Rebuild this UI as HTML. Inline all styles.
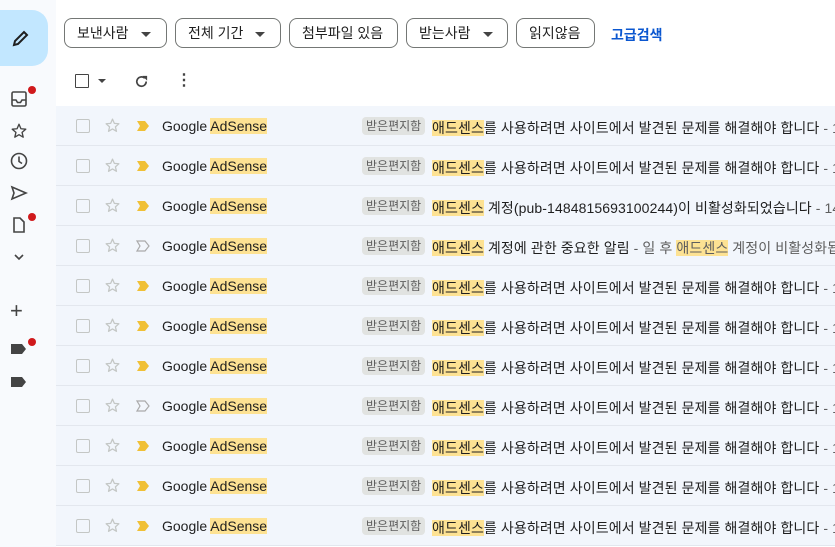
<!DOCTYPE html>
<html><head><meta charset="utf-8"><style>
body{margin:0;width:835px;height:547px;overflow:hidden;background:#fff;font-family:"Liberation Sans","Noto Sans CJK KR",sans-serif;position:relative}
.side{position:absolute;left:0;top:0;width:56px;height:547px;background:#f8fafd}
.compose{position:absolute;left:0;top:10px;width:48px;height:56px;background:#c2e7ff;border-radius:0 16px 16px 0}
.ic{position:absolute;left:10px}
.dot{position:absolute;width:8px;height:8px;border-radius:50%;background:#d0191c}
.chip{position:absolute;top:18px;height:30px;border:1px solid #747775;border-radius:8px;box-sizing:border-box;font-size:14px;color:#1f1f1f;line-height:28px;padding:0 12px}
.chip .ar{display:inline-block;width:0;height:0;border-left:5px solid transparent;border-right:5px solid transparent;border-top:5px solid #444;margin-left:12px;vertical-align:middle}
.row{position:absolute;left:56px;width:779px;height:39px;background:#f2f6fc;border-bottom:1px solid #e3e7ee}
.cb{position:absolute;left:20px;top:13px;width:12px;height:12px;border:1.5px solid #c4c7c5;border-radius:2px}
.st{position:absolute;left:48px;top:11px}
.imp{position:absolute;left:80px;top:14px}
.snd{position:absolute;left:106px;top:12px;font-size:14px;color:#1f1f1f}
.hl{background:#fde293}
.lbl{position:absolute;left:306px;top:11px;height:18px;line-height:18px;background:#e1e3e1;color:#5e5e5e;font-size:12px;padding:0 4px;border-radius:4px}
.sub{position:absolute;left:376px;top:12px;font-size:14px;color:#1f1f1f;white-space:nowrap;letter-spacing:0.1px}
.sub b{font-weight:normal;background:#fde293}
.g{color:#5e5e5e}
</style></head><body>
<div class="side">
<div class="compose"><svg style="position:absolute;left:12px;top:19px" width="18" height="18" viewBox="0 0 18 18"><path d="M2 16 L3 12 L12 3 L15 6 L6 15 Z" fill="none" stroke="#1f1f1f" stroke-width="2"/></svg></div>
<svg class="ic" style="top:90px" width="18" height="18" viewBox="0 0 18 18"><rect x="2" y="2" width="14" height="14" rx="1.5" fill="none" stroke="#444" stroke-width="1.6"/><path d="M2 10h4l1.5 2.5h3L12 10h4" fill="none" stroke="#444" stroke-width="1.6"/></svg><div class="dot" style="left:28px;top:86px"></div>
<svg class="ic" style="top:122px" width="18" height="18" viewBox="0 0 24 24"><path d="M12 3l2.6 6 6.4.6-4.9 4.3 1.5 6.3L12 16.9 6.4 20.2l1.5-6.3L3 9.6 9.4 9z" fill="none" stroke="#444" stroke-width="1.8" stroke-linejoin="round"/></svg>
<svg class="ic" style="top:152px" width="18" height="18" viewBox="0 0 18 18"><circle cx="9" cy="9" r="7.5" fill="none" stroke="#444" stroke-width="1.6"/><path d="M9 4.5v5l3 2" fill="none" stroke="#444" stroke-width="1.6"/></svg>
<svg class="ic" style="top:184px" width="18" height="18" viewBox="0 0 18 18"><path d="M2 3L16 9L2 15L4 9Z" fill="none" stroke="#444" stroke-width="1.6"/></svg>
<svg class="ic" style="top:216px" width="18" height="18" viewBox="0 0 18 18"><path d="M4 2h6l4 4v10H4Z" fill="none" stroke="#444" stroke-width="1.6"/></svg><div class="dot" style="left:28px;top:213px"></div>
<svg class="ic" style="top:250px" width="18" height="14" viewBox="0 0 18 14"><path d="M5 5l4 4 4-4" fill="none" stroke="#444" stroke-width="1.6"/></svg>
<div class="ic" style="top:298px;font-size:22px;color:#444;left:10px;line-height:26px">+</div>
<svg class="ic" style="top:342px" width="18" height="14" viewBox="0 0 18 14"><path d="M1 2h11l4 5-4 5H1Z" fill="#444"/></svg><div class="dot" style="left:28px;top:338px"></div>
<svg class="ic" style="top:375px" width="18" height="14" viewBox="0 0 18 14"><path d="M1 2h11l4 5-4 5H1Z" fill="#444"/></svg>
</div>
<div class="chip" style="left:64px;width:103px">보낸사람<span class="ar"></span></div>
<div class="chip" style="left:175px;width:106px">전체 기간<span class="ar"></span></div>
<div class="chip" style="left:289px;width:109px">첨부파일 있음</div>
<div class="chip" style="left:406px;width:102px">받는사람<span class="ar"></span></div>
<div class="chip" style="left:516px;width:79px">읽지않음</div>
<div style="position:absolute;left:611px;top:25px;font-size:14px;color:#0b57d0;font-weight:bold">고급검색</div>
<div style="position:absolute;left:75px;top:74px;width:12px;height:12px;border:1.6px solid #444;border-radius:1px"></div>
<div style="position:absolute;left:98px;top:79px;border-left:4px solid transparent;border-right:4px solid transparent;border-top:4px solid #444"></div>
<svg style="position:absolute;left:134px;top:74px" width="15" height="15" viewBox="0 0 16 16"><path d="M13 8A5 5 0 1 1 11.5 4.5" fill="none" stroke="#444" stroke-width="1.8"/><path d="M9 2h5v5z" fill="#444"/></svg>
<div style="position:absolute;left:176px;top:70px;font-size:16px;color:#444;font-weight:bold">⋮</div>
<div id="rows"></div>
<script>
var a='<b>애드센스</b>를 사용하려면 사이트에서 발견된 문제를 해결해야 합니다 <span class="g">- 14</span>';
var subs=[a,a,'<b>애드센스</b> 계정(pub-1484815693100244)이 비활성화되었습니다 <span class="g">- 14</span>','<b>애드센스</b> 계정에 관한 중요한 알림 <span class="g">- 일 후 <b>애드센스</b> 계정이 비활성화됩</span>',a,a,a,a,a,a,a];
var h='';
for(var i=0;i<11;i++){var hol=(i==3||i==7);
h+='<div class="row" style="top:'+(106+i*40)+'px"><div class="cb"></div><svg class="st" width="17" height="17" viewBox="0 0 24 24"><path d="M12 3l2.6 6 6.4.6-4.9 4.3 1.5 6.3L12 16.9 6.4 20.2l1.5-6.3L3 9.6 9.4 9z" fill="none" stroke="#c4c7c5" stroke-width="1.8" stroke-linejoin="round"/></svg><svg class="imp" width="14" height="12" viewBox="0 0 14 12"><path d="M1 1h8l4 5-4 5H1l3-5Z" '+(hol?'fill="none" stroke="#aaa" stroke-width="1.2"':'fill="#f0c036"')+'/></svg><div class="snd">Google <span class="hl">AdSense</span></div><div class="lbl">받은편지함</div><div class="sub">'+subs[i]+'</div></div>';}
document.getElementById('rows').innerHTML=h;
</script>
</body></html>
